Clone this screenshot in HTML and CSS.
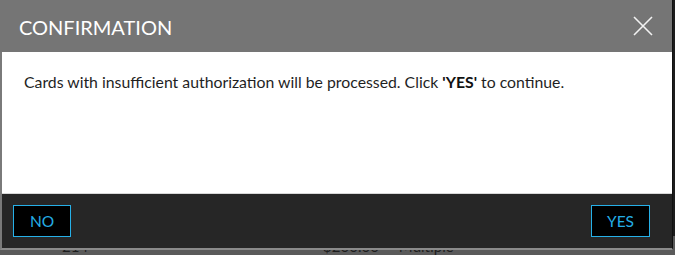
FILE: index.html
```html
<!DOCTYPE html>
<html>
<head>
<meta charset="utf-8">
<link rel="stylesheet" href="styles.css">
</head>
<body>
<div class="page">
  <div class="bg-row">
    <span class="c1">214</span>
    <span class="c2">$200.00</span>
    <span class="c3">Multiple</span>
  </div>
  <div class="dialog">
    <div class="dlg-head">
      <span class="dlg-title">CONFIRMATION</span>
      <svg class="close" width="20" height="20" viewBox="0 0 20 20"><path d="M1 1 L19 19 M19 1 L1 19" stroke="#f2f2f2" stroke-width="1.6" fill="none"/></svg>
    </div>
    <div class="dlg-body">
      Cards with insufficient authorization will be processed. Click <b>'YES'</b> to continue.
    </div>
    <div class="dlg-foot">
      <button class="btn btn-no">NO</button>
      <button class="btn">YES</button>
    </div>
  </div>
</div>
</body>
</html>
```
FILE: styles.css
```css
html, body { margin: 0; padding: 0; }
body {
  width: 675px; height: 255px; overflow: hidden;
  background: #575757;
  font-family: Lato, "Liberation Sans", sans-serif;
}
.page { position: relative; width: 675px; height: 255px; background: #1c1c1c; }
.bg-row {
  position: absolute; left: 0; top: 236px; width: 675px; height: 19px;
  background: #5a5a5a; color: #1e1e1e; font-size: 15px;
  display: flex; align-items: center;
}
.c1 { margin-left: 62px; }
.c2 { margin-left: 235px; }
.c3 { margin-left: 20px; }
.dialog {
  position: absolute; left: 0; top: 0; width: 673px; height: 250px;
  box-sizing: border-box;
  border-left: 2px solid #7a7a7a;
  border-right: 1px solid #111;
  border-bottom: 2px solid #8a8a8a;
  display: flex; flex-direction: column;
  background: #262626;
}
.dlg-head {
  height: 52px; background: #757575; margin-left: -2px;
  display: flex; align-items: center; justify-content: space-between;
  padding: 0 19px 0 19px;
}
.dlg-title { color: #fff; font-size: 20px; padding-top: 1px; }
.close { display: block; margin-top: 0; }
.dlg-body {
  height: 142px; background: #fff; color: #1f1f1f; font-size: 15.8px;
  padding: 20px 0 0 22px; box-sizing: border-box;
  border-bottom: 1px solid #d8d8d8;
}
.dlg-body b { font-weight: 700; color: #111; }
.dlg-foot {
  flex: 1; background: #262626;
  display: flex; align-items: center; justify-content: space-between;
  padding: 0 22px 0 11px;
}
.btn {
  background: #000; color: #24aee6; border: 1px solid #26b0e8;
  font-family: Lato, "Liberation Sans", sans-serif; font-size: 15.5px;
  height: 32px; padding: 0 15px; margin: 0; cursor: pointer;
}
.btn-no { padding: 0 16px; }
```
